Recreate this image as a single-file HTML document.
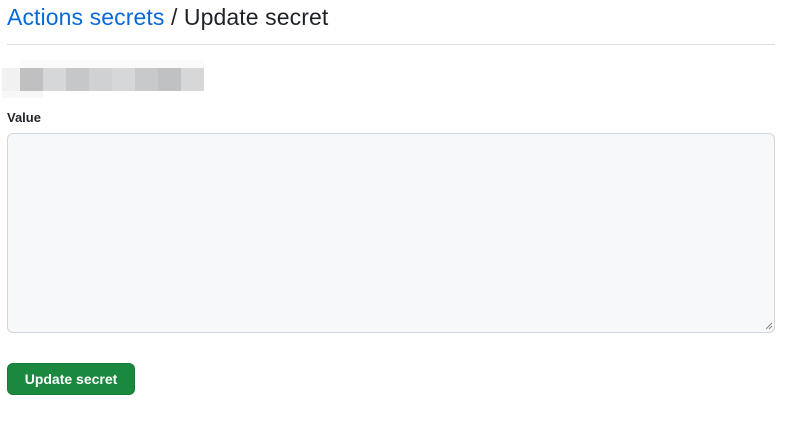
<!DOCTYPE html>
<html><head><style>
body{margin:0;background:#fff;font-family:"Liberation Sans",sans-serif;width:803px;height:437px;position:relative;overflow:hidden}
.t{position:absolute;left:7px;top:4px;font-size:23px;letter-spacing:0.1px;color:#1f2328;white-space:nowrap}
.t a{color:#0969da;text-decoration:none}
.hr{position:absolute;left:7px;top:44px;width:768px;height:1px;background:#d8dee4}
.b{position:absolute;top:68px;height:23px}
.lbl{position:absolute;left:7px;top:110px;font-size:13px;font-weight:bold;color:#1f2328}
.ta{position:absolute;left:7px;top:133px;width:766px;height:198px;border:1px solid #d0d7de;border-radius:6px;background:#f6f8fa}
.btn{position:absolute;left:7px;top:363px;width:128px;height:32px;border-radius:6px;background:#1a883e;color:#fff;font-size:14px;font-weight:bold;text-align:center;line-height:32px;box-shadow:inset 0 0 0 1px rgba(0,0,0,.1)}
</style></head><body>
<div class="t"><a>Actions secrets</a> / Update secret</div>
<div class="hr"></div>
<div class="b" style="left:20px;top:60px;width:184px;height:8px;background:#fafafa"></div>
<div class="b" style="left:2px;top:91px;width:41px;height:7px;background:#f7f7f7"></div>
<div class="b" style="left:2px;width:18px;background:#f1f1f1"></div>
<div class="b" style="left:20px;width:23px;background:#c0c0c3"></div>
<div class="b" style="left:43px;width:23px;background:#d6d7d8"></div>
<div class="b" style="left:66px;width:23px;background:#c6c7c9"></div>
<div class="b" style="left:89px;width:23px;background:#d0d1d2"></div>
<div class="b" style="left:112px;width:23px;background:#d6d7d8"></div>
<div class="b" style="left:135px;width:23px;background:#c8c9cb"></div>
<div class="b" style="left:158px;width:23px;background:#c0c1c3"></div>
<div class="b" style="left:181px;width:23px;background:#d6d7d8"></div>
<div class="lbl">Value</div>
<div class="ta"></div>
<svg style="position:absolute;left:765px;top:322px" width="8" height="8"><path d="M1 7L7 1M4 7L7 4" stroke="#888" stroke-width="1"/></svg>
<div class="btn">Update secret</div>
</body></html>
